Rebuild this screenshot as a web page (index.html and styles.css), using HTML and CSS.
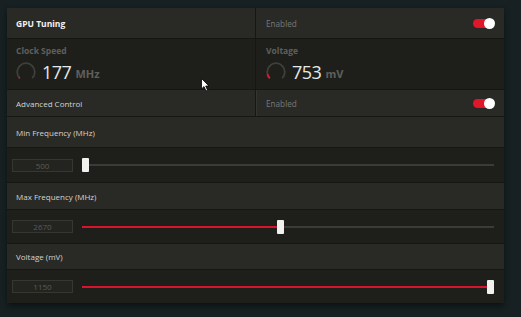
FILE: index.html
```html
<!DOCTYPE html>
<html>
<head>
    <link rel="stylesheet" href="styles.css">
</head>
<body>
    <div class="panel">
        <div class="row head split">
            <div class="cell"><span class="title">GPU Tuning</span></div>
            <div class="cell"><span class="muted">Enabled</span><span class="toggle"></span></div>
        </div>

        <div class="row stats split">
            <div class="cell stat">
                <div class="stat-label">Clock Speed</div>
                <div class="stat-value">
                    <svg class="gauge" width="22" height="22" viewBox="0 0 20 20">
                        <path d="M4.34 15.66 A8 8 0 1 1 15.66 15.66" fill="none" stroke="#3f403c" stroke-width="1.6"/>
                        <path d="M4.34 15.66 A8 8 0 0 1 3.7 14.9" fill="none" stroke="#e0162b" stroke-width="1.8"/>
                    </svg>
                    <span class="num">177</span><span class="unit">MHz</span>
                </div>
                <svg class="cursor" width="10" height="14" viewBox="0 0 10 14">
                    <path d="M0.5 0.5 L0.5 11 L3 8.6 L5 13 L6.6 12.3 L4.7 8 L8 8 Z" fill="#fff" stroke="#000" stroke-width="0.8"/>
                </svg>
            </div>
            <div class="cell stat">
                <div class="stat-label">Voltage</div>
                <div class="stat-value">
                    <svg class="gauge" width="22" height="22" viewBox="0 0 20 20">
                        <path d="M4.34 15.66 A8 8 0 1 1 15.66 15.66" fill="none" stroke="#3f403c" stroke-width="1.6"/>
                        <path d="M4.34 15.66 A8 8 0 0 1 2.27 12.07" fill="none" stroke="#e0162b" stroke-width="1.8"/>
                    </svg>
                    <span class="num">753</span><span class="unit">mV</span>
                </div>
            </div>
        </div>

        <div class="row head split short">
            <div class="cell"><span class="label">Advanced Control</span></div>
            <div class="cell edge"><span class="muted">Enabled</span><span class="toggle"></span></div>
        </div>

        <div class="row head field">
            <span class="label">Min Frequency (MHz)</span>
        </div>
        <div class="row body slider-row">
            <div class="num-box">500</div>
            <div class="track">
                <div class="fill" style="width: 0%"></div>
                <div class="thumb" style="left: calc((100% - 7px) * 0)"></div>
            </div>
        </div>

        <div class="row head field short">
            <span class="label">Max Frequency (MHz)</span>
        </div>
        <div class="row body slider-row tall">
            <div class="num-box">2670</div>
            <div class="track">
                <div class="fill" style="width: calc((100% - 7px) * 0.481 + 3px)"></div>
                <div class="thumb" style="left: calc((100% - 7px) * 0.481)"></div>
            </div>
        </div>

        <div class="row head field shorter">
            <span class="label">Voltage (mV)</span>
        </div>
        <div class="row body slider-row tall">
            <div class="num-box">1150</div>
            <div class="track">
                <div class="fill" style="width: calc((100% - 7px) * 1 + 3px)"></div>
                <div class="thumb" style="left: calc((100% - 7px) * 1)"></div>
            </div>
        </div>
    </div>
</body>
</html>
```
FILE: styles.css
```css
body {
    margin: 0;
    background-color: #172022;
    font-family: 'Open Sans', 'Noto Sans', sans-serif;
    width: 521px;
    height: 317px;
    overflow: hidden;
}

.panel {
    margin: 8px 0 0 7px;
    width: 497px;
    display: flex;
    flex-direction: column;
    gap: 1px;
    background: #161714;
    box-shadow: 0 3px 6px rgba(0,0,0,0.45);
}

.row {
    display: flex;
    align-items: center;
}

.head {
    height: 30px;
    background: #292a26;
}

.body {
    background: #1e1f1b;
}

.split {
    display: grid;
    grid-template-columns: 248px 1fr;
    column-gap: 1px;
    background: #161714;
}

.split .cell {
    display: flex;
    align-items: center;
    height: 100%;
    padding-left: 9px;
    background: #292a26;
}

.split .cell:last-child {
    padding-left: 10px;
    padding-right: 10px;
}

.short {
    height: 26px;
}

.shorter {
    height: 25px;
}

.edge {
    box-shadow: inset 1px 0 0 #34352f;
}

.title {
    color: #f2f2f2;
    font-size: 8.5px;
    font-weight: 700;
}

.label {
    color: #d4d4d2;
    font-size: 8px;
}

.field {
    padding-left: 9px;
}

.muted {
    color: #777874;
    font-size: 8.2px;
}

.toggle {
    margin-left: auto;
    width: 21px;
    height: 9px;
    border-radius: 5px;
    background: #e0162b;
    position: relative;
}

.toggle::after {
    content: '';
    position: absolute;
    right: -1px;
    top: -1px;
    width: 11px;
    height: 11px;
    border-radius: 50%;
    background: #ffffff;
}

.stats {
    height: 50px;
}

.stats .cell.stat {
    background: #1e1f1b;
    flex-direction: column;
    align-items: flex-start;
    justify-content: flex-start;
    position: relative;
}

.stat-label {
    margin-top: 6px;
    color: #5e5f5b;
    font-size: 8.5px;
    font-weight: 700;
}

.stat-value {
    display: flex;
    align-items: center;
    margin-top: 5px;
}

.gauge {
    margin-left: -1px;
}

.num {
    margin-left: 5px;
    color: #e6e8e8;
    font-size: 18px;
    letter-spacing: -0.5px;
    line-height: 20px;
}

.unit {
    margin-left: 4px;
    margin-top: 3px;
    color: #5e5f5b;
    font-size: 11px;
    font-weight: 700;
}

.cursor {
    position: absolute;
    left: 194px;
    top: 39px;
}

.slider-row {
    height: 34px;
    padding: 0 10px 0 5px;
}

.tall {
    height: 33px;
}

.num-box {
    width: 59px;
    height: 11px;
    border: 1px solid #363733;
    background: #23241f;
    color: #5a5b57;
    font-size: 8px;
    line-height: 11px;
    text-align: center;
}

.track {
    flex: 1;
    margin-left: 9px;
    height: 2px;
    background: #3b3c38;
    position: relative;
}

.fill {
    height: 100%;
    background: #d7132e;
}

.thumb {
    position: absolute;
    top: -6px;
    width: 7px;
    height: 14px;
    border-radius: 1px;
    background: #f1f1ef;
}
```
